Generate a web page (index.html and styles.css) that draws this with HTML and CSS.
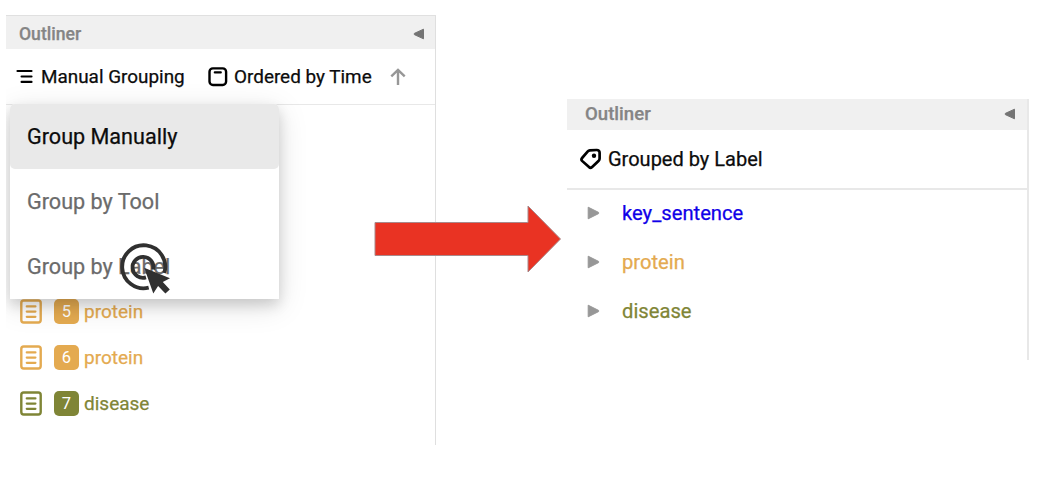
FILE: index.html
```html
<!DOCTYPE html>
<html lang="en">
<head>
<meta charset="utf-8">
<title>Outliner grouping</title>
<link rel="stylesheet" href="styles.css">
</head>
<body>
<svg class="defs" width="0" height="0" aria-hidden="true">
  <symbol id="region" viewBox="0 0 22 25">
    <rect x="1.3" y="1.5" width="19.4" height="22" rx="2.4" fill="none" stroke="currentColor" stroke-width="2.4"/>
    <path d="M6.8 7.4h8.6M6.8 12.6h8.6M6.8 17.8h8.6" fill="none" stroke="currentColor" stroke-width="2.3" stroke-linecap="round"/>
  </symbol>
  <symbol id="collapse" viewBox="0 0 12 12">
    <path d="M10.5 1.2v9.6L1.3 6.6V5.4z" fill="#747474" stroke="#747474" stroke-linejoin="round"/>
  </symbol>
  <symbol id="expand" viewBox="0 0 13 14">
    <path d="M1.2 1.2v11.6L11.6 7.6V6.4z" fill="#979797" stroke="#979797" stroke-linejoin="round"/>
  </symbol>
</svg>
<main class="board">
  <section class="panel panel-before">
    <header class="panel-header">
      <h2 class="title">Outliner</h2>
      <svg class="collapse"><use href="#collapse"/></svg>
    </header>
    <div class="toolbar">
      <svg class="icon-group" viewBox="0 0 17 15"><path d="M1.5 2h14M5.6 7.500h9.900M5.600 12.900h9.900" fill="none" stroke="#000" stroke-width="2.2" stroke-linecap="round"/></svg>
      <span class="group-text">Manual Grouping</span>
      <svg class="icon-date" viewBox="0 0 20 20"><rect x="1.5" y="1.4" width="16.6" height="16.6" rx="3.4" fill="none" stroke="#000" stroke-width="2.4"/><path d="M6.8 5.4h6" stroke="#000" stroke-width="2.2" stroke-linecap="round"/></svg>
      <span class="order-text">Ordered by Time</span>
      <svg class="icon-up" viewBox="0 0 16 18"><path d="M8 17V2M1.3 8.3 8 1.8l6.7 6.5" fill="none" stroke="#979797" stroke-width="2.4"/></svg>
    </div>
    <ul class="regions">
      <li class="region orange"><svg class="region-icon"><use href="#region"/></svg><span class="badge">5</span><span>protein</span></li>
      <li class="region orange"><svg class="region-icon"><use href="#region"/></svg><span class="badge">6</span><span>protein</span></li>
      <li class="region olive"><svg class="region-icon"><use href="#region"/></svg><span class="badge">7</span><span>disease</span></li>
    </ul>
    <ul class="menu">
      <li class="menu-item selected">Group Manually</li>
      <li class="menu-item">Group by Tool</li>
      <li class="menu-item">Group by Label</li>
    </ul>
    <svg class="cursor" viewBox="0 0 54 54">
      <g fill="none" stroke="#303030" stroke-width="3.8">
        <path d="M30.7 45.7A21.5 21.5 0 1 1 46.3 31"/>
        <path d="M28 35.4A10.5 10.5 0 1 1 35.3 27.5"/>
      </g>
      <path d="M26.2 25.8 52 36.2l-7.2 3.7 7 7.5-4.4 4.2-7.3-7.5-4.8 7.3z" fill="#303030"/>
    </svg>
  </section>

  <section class="panel panel-after">
    <header class="panel-header">
      <h2 class="title">Outliner</h2>
      <svg class="collapse"><use href="#collapse"/></svg>
    </header>
    <div class="toolbar">
      <svg class="icon-tag" viewBox="0 0 22 22"><path d="M9.8 2.4 16.600 2Q19.6 1.900 19.600 4.800V10.400Q19.600 11.700 18.700 12.700L11.900 19.200Q10.400 20.400 9 19L2.100 12.900Q.800 11.500 2.100 10L7.800 3.400Q8.600 2.500 9.800 2.400z" fill="none" stroke="#000" stroke-width="2.7"/><circle cx="14" cy="7.700" r="2.200"/></svg>
      <span>Grouped by Label</span>
    </div>
    <ul class="labels">
      <li class="label blue"><svg class="expand"><use href="#expand"/></svg>key_sentence</li>
      <li class="label orange"><svg class="expand"><use href="#expand"/></svg>protein</li>
      <li class="label olive"><svg class="expand"><use href="#expand"/></svg>disease</li>
    </ul>
  </section>

  <svg class="arrow" viewBox="0 0 190 70"><path d="M2 18.500H155V2l32.500 33L155 68V51.500H2z" fill="#e93323" stroke="#a9898b" stroke-width="1"/></svg>
</main>
</body>
</html>
```
FILE: styles.css
```css
* { box-sizing: border-box; }
body { margin: 0; background: #fff; font-family: Roboto, "Liberation Sans", sans-serif; -webkit-text-stroke: .25px currentColor; }
.defs { position: absolute; }
svg { display: block; flex: none; }
ul { list-style: none; margin: 0; padding: 0; }
.board {
  position: relative;
  display: flex;
  align-items: flex-start;
  justify-content: space-between;
  width: 1038px;
  height: 491px;
  padding: 15px 9px 0 6px;
  overflow: hidden;
}
.panel { position: relative; white-space: nowrap; }
.panel-header { display: flex; align-items: center; justify-content: space-between; background: #f0f0f0; }
.title { margin: 0; font-weight: 500; color: #858585; }
.collapse { width: 12px; height: 12px; }
.toolbar { display: flex; align-items: center; color: #0c0c0c; border-bottom: 2px solid #e8e8e8; }

.panel-before {
  width: 430px;
  height: 430px;
  overflow: hidden;
  border-top: 1px solid #e0e0e0;
  border-right: 1px solid #dfdfdf;
}
.panel-before .panel-header { height: 33px; padding: 2px 10px 0 13px; }
.panel-before .title { font-size: 17.6px; }
.panel-before .toolbar { height: 56px; padding: 0 0 0 10px; border-bottom-width: 1px; font-size: 18.9px; }
.icon-group { width: 17px; height: 15px; }
.group-text { width: 159px; margin-left: 8px; }
.icon-date { width: 20px; height: 20px; margin-left: 8px; }
.order-text { width: 145px; margin-left: 6px; }
.icon-up { width: 16px; height: 18px; margin-left: 11px; }

.regions { padding: 183px 0 0 14px; }
.region { display: flex; align-items: center; height: 46px; font-size: 19px; }
.region-icon { width: 22px; height: 25px; }
.badge {
  width: 25px;
  height: 25px;
  margin: 0 5px 0 12px;
  border-radius: 5px;
  background: currentColor;
  text-align: center;
  font-size: 16.5px;
  line-height: 25px;
  -webkit-text-stroke: 0;
}
.badge::first-letter { color: #fff; }
.orange { color: #e4aa50; }
.olive { color: #7f8536; }
.blue { color: #1000e8; }

.menu {
  position: absolute;
  top: 88px;
  left: 4px;
  width: 269px;
  background: #fff;
  border-radius: 5px 5px 0 0;
  box-shadow: 0 6px 13px rgba(0, 0, 0, .14), 0 7px 30px rgba(0, 0, 0, .13);
}
.menu-item { height: 65px; padding-left: 17px; font-size: 21.6px; line-height: 65px; color: #6b6b6b; }
.selected { background: #e9e9e9; color: #0c0c0c; border-radius: 5px; }
.cursor { position: absolute; left: 112px; top: 226px; width: 54px; height: 54px; }

.panel-after { width: 462px; height: 261px; margin-top: 84px; border-right: 2px solid #e8e8e8; }
.panel-after .panel-header { height: 31px; padding: 0 11px 2px 18px; }
.panel-after .title { font-size: 18.6px; }
.panel-after .toolbar { height: 60px; padding-left: 13px; font-size: 20px; }
.icon-tag { width: 22px; height: 22px; margin-right: 6px; }
.labels { margin-top: -2px; }
.label { display: flex; align-items: center; height: 49px; padding-left: 20px; font-size: 20.2px; }
.expand { width: 13px; height: 14px; margin-right: 22px; }

.arrow { position: absolute; left: 373px; top: 204px; width: 190px; height: 70px; }
```
